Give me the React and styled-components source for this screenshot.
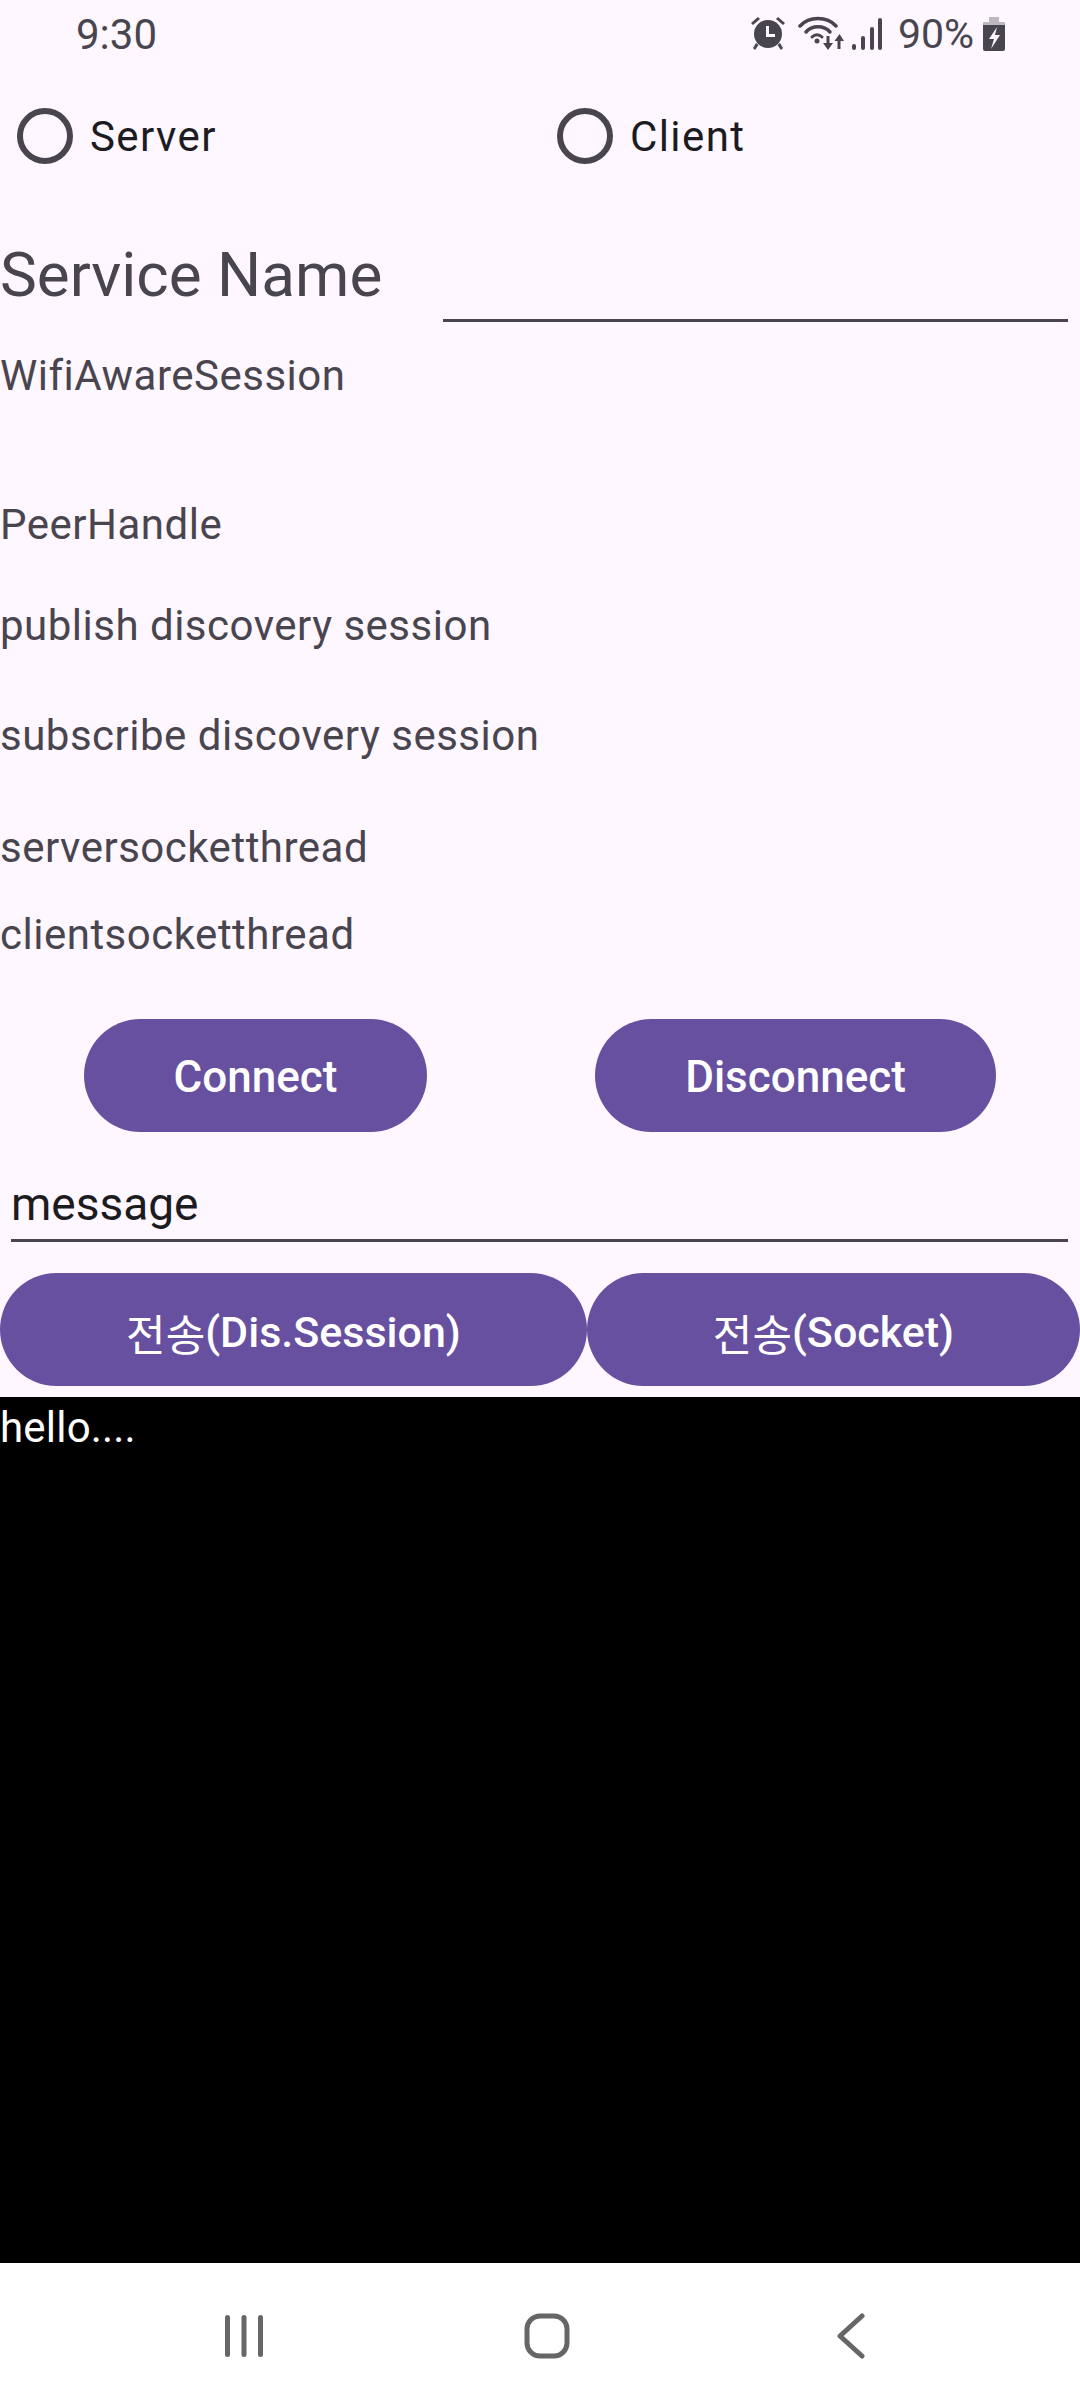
import styled, { createGlobalStyle } from "styled-components";

const GlobalStyle = createGlobalStyle`
  html, body {
    margin: 0;
    padding: 0;
    background: #fef7ff;
    font-family: Roboto, "Noto Sans CJK KR", sans-serif;
  }
`;

const Screen = styled.div`
  width: 1080px;
  height: 2400px;
  display: flex;
  flex-direction: column;
  background: #fef7ff;
  overflow: hidden;
`;

const StatusBar = styled.div`
  height: 68px;
  display: flex;
  align-items: center;
  justify-content: space-between;
  padding: 0 74px 0 76px;
  color: #49454f;
`;
const Time = styled.span`
  font-size: 42px;
`;
const StatusIcons = styled.div`
  display: flex;
  align-items: center;
`;
const StatusSlot = styled.span`
  display: flex;
  margin-left: ${(p) => p.$left}px;
`;
const Percent = styled.span`
  font-size: 41px;
  margin-left: 15px;
`;

const RadioRow = styled.div`
  height: 134px;
  padding-top: 2px;
  box-sizing: border-box;
  display: grid;
  grid-template-columns: 540px 1fr;
  align-items: center;
`;
const Radio = styled.label`
  display: flex;
  align-items: center;
  gap: 17px;
  padding-left: 17px;
  font-size: 42px;
  letter-spacing: 1.4px;
  color: #1c1b1f;
`;
const RadioCircle = styled.span`
  width: 56px;
  height: 56px;
  box-sizing: border-box;
  border: 6px solid #49454f;
  border-radius: 50%;
`;

const ServiceRow = styled.div`
  height: 149px;
  display: flex;
  padding-right: 12px;
  color: #49454f;
`;
const ServiceLabel = styled.span`
  width: 443px;
  font-size: 62px;
  line-height: 76px;
  padding-top: 35px;
`;
const Underline = styled.div`
  flex: 1;
  height: 117px;
  border-bottom: 3px solid #49454f;
`;

const Info = styled.div`
  height: ${(p) => p.$h}px;
  font-size: 42px;
  line-height: 50px;
  letter-spacing: 0.5px;
  color: #49454f;
`;

const ButtonRow = styled.div`
  height: 113px;
  display: flex;
  margin-top: ${(p) => p.$top || 0}px;
  padding-left: ${(p) => p.$left || 0}px;
`;
const Button = styled.div`
  width: ${(p) => p.$w}px;
  margin-left: ${(p) => p.$gap || 0}px;
  height: 113px;
  padding-top: ${(p) => p.$nudge || 2}px;
  box-sizing: border-box;
  display: flex;
  align-items: center;
  justify-content: center;
  border-radius: 57px;
  background: #67509f;
  color: #fff;
  font-size: ${(p) => p.$size || 44}px;
  font-weight: 500;
`;
const Hangul = styled.span`
  font-weight: 400;
`;

const MessageField = styled.div`
  height: 110px;
  margin: 0 12px 0 11px;
  box-sizing: border-box;
  border-bottom: 3px solid #49454f;
  display: flex;
  align-items: flex-end;
  padding-bottom: 5px;
  font-size: 46px;
  line-height: 60px;
  color: #1c1b1f;
`;

const Log = styled.div`
  height: 866px;
  margin-top: 11px;
  background: #000;
  color: #fff;
  font-size: 42px;
  line-height: 62px;
  letter-spacing: 0.2px;
`;

const NavBar = styled.div`
  flex: 1;
  background: #fff;
  display: flex;
  align-items: center;
  padding-top: 9px;
`;
const NavSlot = styled.div`
  flex: none;
  box-sizing: border-box;
  width: ${(p) => p.$w}px;
  padding-left: ${(p) => p.$pad || 0}px;
  display: flex;
  justify-content: center;
`;

function AlarmIcon() {
  return (
    <svg width="36" height="34" viewBox="0 0 36 34" fill="#49454f">
      <circle cx="18" cy="17" r="14" />
      <path d="M16 9h3v8h6v3h-9z" fill="#fef7ff" />
      <path d="M1 6l7-6 2 2-7 6zM35 6l-7-6-2 2 7 6zM6 26l2.500 2-3.500 5-2-2zM30 26l-2.500 2 3.500 5 2-2z" />
    </svg>
  );
}
function WifiIcon() {
  return (
    <svg width="46" height="36" viewBox="0 0 46 36" fill="none">
      <g stroke="#49454f" strokeWidth="3.500" strokeLinecap="round">
        <path d="M2 10C11 0 29 0 38 10" />
        <path d="M8 16C14 9 26 9 32 16" />
      </g>
      <path d="M14 21c3-3 7-3 10 0" stroke="#49454f" strokeWidth="3" strokeLinecap="round" />
      <circle cx="19" cy="25" r="2.500" fill="#49454f" />
      <path d="M28.500 20h3v7H35l-5 7-5-7h3.500zM39.500 33h3v-8H46l-4.500-7-5 7h3z" fill="#49454f" />
    </svg>
  );
}
function SignalIcon() {
  return (
    <svg width="31" height="34" viewBox="0 0 31 34" fill="#49454f">
      <rect x="0" y="27" width="4" height="6" rx="2" />
      <rect x="9" y="19" width="4" height="14" rx="2" />
      <rect x="18" y="10" width="4" height="23" rx="2" />
      <rect x="26" y="1" width="4" height="32" rx="2" />
    </svg>
  );
}
function BatteryIcon() {
  return (
    <svg width="24" height="34" viewBox="0 0 24 34">
      <path d="M7 0h10v5h6v3H1V5h6z" fill="#bdb8c0" />
      <path d="M1 8h22v24a2 2 0 0 1-2 2H3a2 2 0 0 1-2-2z" fill="#49454f" />
      <path d="M15 10l-8 12h5l-3 10 9-14h-5z" fill="#fef7ff" />
    </svg>
  );
}

function RecentsIcon() {
  return (
    <svg width="40" height="44" viewBox="0 0 40 44" fill="#666">
      <rect x="1" y="1" width="5" height="42" rx="2.500" />
      <rect x="17.500" y="1" width="5" height="42" rx="2.500" />
      <rect x="34" y="1" width="5" height="42" rx="2.500" />
    </svg>
  );
}
function HomeIcon() {
  return (
    <svg width="46" height="46" viewBox="0 0 46 46" fill="none">
      <rect x="3" y="3" width="40" height="40" rx="13" stroke="#666" strokeWidth="5" />
    </svg>
  );
}
function BackIcon() {
  return (
    <svg width="32" height="46" viewBox="0 0 32 46" fill="none">
      <path d="M27 3L5 23l22 20" stroke="#666" strokeWidth="5" strokeLinecap="round" strokeLinejoin="round" />
    </svg>
  );
}

export default function App() {
  return (
    <Screen>
      <GlobalStyle />
      <StatusBar>
        <Time>9:30</Time>
        <StatusIcons>
          <StatusSlot $left={0}><AlarmIcon /></StatusSlot>
          <StatusSlot $left={12}><WifiIcon /></StatusSlot>
          <StatusSlot $left={8}><SignalIcon /></StatusSlot>
          <Percent>90%</Percent>
          <StatusSlot $left={8}><BatteryIcon /></StatusSlot>
        </StatusIcons>
      </StatusBar>
      <RadioRow>
        <Radio>
          <RadioCircle />
          Server
        </Radio>
        <Radio>
          <RadioCircle />
          Client
        </Radio>
      </RadioRow>
      <ServiceRow>
        <ServiceLabel>Service Name</ServiceLabel>
        <Underline />
      </ServiceRow>
      <Info $h={149}>WifiAwareSession</Info>
      <Info $h={101}>PeerHandle</Info>
      <Info $h={110}>publish discovery session</Info>
      <Info $h={112}>subscribe discovery session</Info>
      <Info $h={87}>serversocketthread</Info>
      <Info $h={59}>clientsocketthread</Info>
      <ButtonRow $left={84} $top={50}>
        <Button $w={343} $nudge={3}>Connect</Button>
        <Button $w={401} $gap={168} $nudge={3}>Disconnect</Button>
      </ButtonRow>
      <MessageField>message</MessageField>
      <ButtonRow $top={31}>
        <Button $w={587} $size={43} $nudge={5}><Hangul>전송</Hangul>(Dis.Session)</Button>
        <Button $w={493} $size={43} $nudge={5}><Hangul>전송</Hangul>(Socket)</Button>
      </ButtonRow>
      <Log>hello....</Log>
      <NavBar>
        <NavSlot $w={488}><RecentsIcon /></NavSlot>
        <NavSlot $w={118}><HomeIcon /></NavSlot>
        <NavSlot $w={474} $pad={16}><BackIcon /></NavSlot>
      </NavBar>
    </Screen>
  );
}
